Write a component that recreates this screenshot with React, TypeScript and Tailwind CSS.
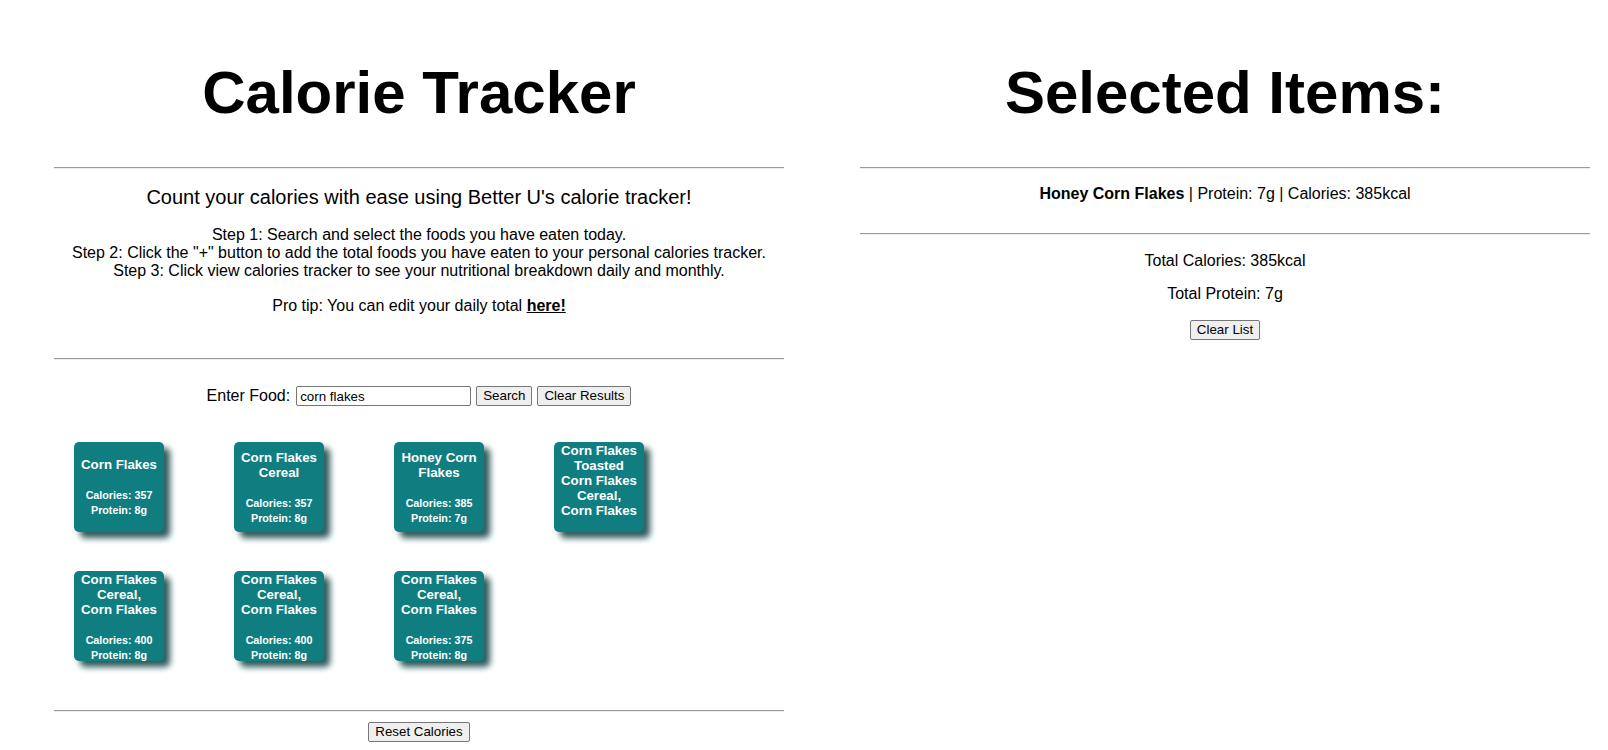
import React from 'react';

// Calorie tracker page: search results on the left, selected items on the right

type Food = { name: string; calories: number; protein: number };

const results: Food[] = [
  { name: 'Corn Flakes', calories: 357, protein: 8 },
  { name: 'Corn Flakes Cereal', calories: 357, protein: 8 },
  { name: 'Honey Corn Flakes', calories: 385, protein: 7 },
  { name: 'Corn Flakes Toasted Corn Flakes Cereal, Corn Flakes', calories: 390, protein: 8 },
  { name: 'Corn Flakes Cereal, Corn Flakes', calories: 400, protein: 8 },
  { name: 'Corn Flakes Cereal, Corn Flakes', calories: 400, protein: 8 },
  { name: 'Corn Flakes Cereal, Corn Flakes', calories: 375, protein: 8 },
];

const selected: Food[] = [{ name: 'Honey Corn Flakes', calories: 385, protein: 7 }];

function Rule({ className = '' }: { className?: string }) {
  return <div className={`h-0 border-t border-b border-t-[#9a9a9a] border-b-[#eeeeee] ${className}`} />;
}

function NativeButton({ children, className = '' }: { children: React.ReactNode; className?: string }) {
  return (
    <button className={`h-[20px] px-[6px] border border-[#767676] rounded-[2px] bg-[#efefef] text-[13.33px] leading-[16px] text-black ${className}`}>
      {children}
    </button>
  );
}

function FoodCard({ food }: { food: Food }) {
  return (
    <div className="w-[90px] h-[90px] flex flex-col overflow-hidden pt-[1px] px-[6px] rounded-[5px] bg-[#107e80] text-white text-center font-bold shadow-[6px_6px_6px_#2d5a5b] cursor-pointer">
      <div className="my-auto">
        <div className="text-[13.28px]">{food.name}</div>
        <div className="mt-[16px] text-[10.72px] leading-[15px]">
          <div>Calories: {food.calories}</div>
          <div>Protein: {food.protein}g</div>
        </div>
      </div>
    </div>
  );
}

export default function App() {
  const totalCalories = selected.reduce((s, f) => s + f.calories, 0);
  const totalProtein = selected.reduce((s, f) => s + f.protein, 0);

  return (
    <div className="flex w-full bg-white text-black leading-[normal] font-['Liberation_Sans',Arial,sans-serif]">
      {/* left column */}
      <div className="w-1/2 pl-[54px] pr-[20px]">
        <h1 className="mt-[58px] text-center text-[60px] font-bold">Calorie Tracker</h1>
        <Rule className="mt-[40px]" />

        <p className="mt-[17px] text-center text-[20px]">Count your calories with ease using Better U's calorie tracker!</p>
        <p className="mt-[17px] text-center text-[16px]">
          Step 1: Search and select the foods you have eaten today.
          <br />
          Step 2: Click the "+" button to add the total foods you have eaten to your personal calories tracker.
          <br />
          Step 3: Click view calories tracker to see your nutritional breakdown daily and monthly.
        </p>
        <p className="mt-[17px] text-center text-[16px]">
          Pro tip: You can edit your daily total{' '}
          <a href="#" className="font-bold underline text-black">here!</a>
        </p>

        <Rule className="mt-[43px]" />

        <div className="mt-[26px] flex items-center justify-center gap-[5px] text-[16px]">
          <span className="mr-[1px]">Enter Food:</span>
          <input
            type="text"
            defaultValue="corn flakes"
            className="w-[175px] h-[20px] px-[3px] border border-[#767676] rounded-[2px] text-[13.33px] text-black outline-none"
          />
          <NativeButton>Search</NativeButton>
          <NativeButton>Clear Results</NativeButton>
        </div>

        <div className="mt-[36px] pl-[20px] flex flex-wrap gap-x-[70px] gap-y-[39px]">
          {results.map((f, i) => (
            <FoodCard key={i} food={f} />
          ))}
        </div>

        <Rule className="mt-[49px]" />
        <div className="mt-[10px] flex justify-center">
          <NativeButton>Reset Calories</NativeButton>
        </div>
      </div>

      {/* right column */}
      <div className="w-1/2 pl-[56px] pr-[18px]">
        <h1 className="mt-[58px] text-center text-[60px] font-bold">Selected Items:</h1>
        <Rule className="mt-[40px]" />

        {selected.map((f, i) => (
          <p key={i} className="mt-[16px] text-center text-[16px]">
            <span className="font-bold">{f.name}</span> | Protein: {f.protein}g | Calories: {f.calories}kcal
          </p>
        ))}

        <Rule className="mt-[30px]" />
        <p className="mt-[17px] text-center text-[16px]">Total Calories: {totalCalories}kcal</p>
        <p className="mt-[15px] text-center text-[16px]">Total Protein: {totalProtein}g</p>
        <div className="mt-[17px] flex justify-center">
          <NativeButton>Clear List</NativeButton>
        </div>
      </div>
    </div>
  );
}
